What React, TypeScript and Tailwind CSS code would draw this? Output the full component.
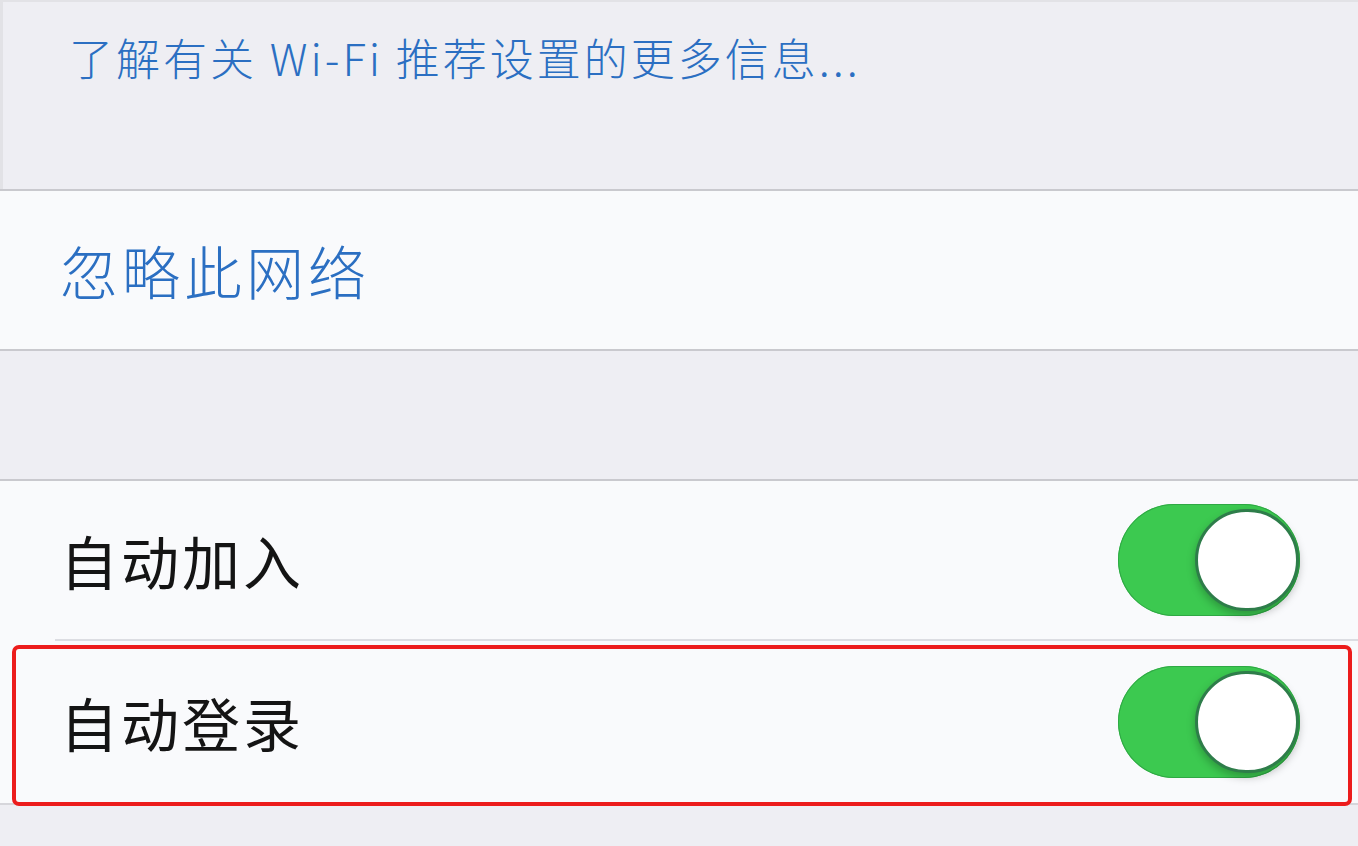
import React from 'react';

const font = { fontFamily: '"Noto Sans CJK SC", "Noto Sans", sans-serif' };

function Toggle() {
  return (
    <div className="relative h-[112px] w-[182px] rounded-full bg-[#3cc950] shadow-[inset_0_0_0_1px_#2fa844]">
      <div className="absolute right-[1px] top-[5px] h-[102px] w-[104px] rounded-full border-[3px] border-[#2e7d4a] bg-white shadow-[0_4px_8px_rgba(0,0,0,0.25)]" />
    </div>
  );
}

export default function App() {
  return (
    <div className="flex h-[846px] w-[1358px] flex-col overflow-hidden bg-[#eeeef3]" style={font}>
      {/* footer text of the previous group */}
      <div className="h-[189px] border-l-[3px] border-t-[2px] border-[#e2e2e6] pl-[66px] pt-[26px]">
        <p className="text-[44px] font-light leading-[58px] tracking-[3px] text-[#2b6fc2]">
          了解有关 Wi-Fi 推荐设置的更多信息...
        </p>
      </div>

      <div className="flex h-[162px] items-center border-y-[2px] border-[#c9c9ce] bg-[#f9fafc] pl-[60px]">
        <span className="text-[58px] font-light tracking-[4px] text-[#2b6fc2]">忽略此网络</span>
      </div>

      <div className="h-[128px]" />

      <div className="border-t-[2px] border-[#c9c9ce] bg-[#f9fafc]">
        <div className="flex h-[158px] items-center justify-between pl-[60px] pr-[58px]">
          <span className="text-[58px] tracking-[3px] text-[#141414]">自动加入</span>
          <Toggle />
        </div>
        <div className="ml-[55px] h-[2px] bg-[#dcdde2]" />
        <div className="relative flex h-[162px] items-center justify-between pl-[60px] pr-[58px]">
          <span className="text-[58px] tracking-[3px] text-[#141414]">自动登录</span>
          <Toggle />
          <div className="pointer-events-none absolute bottom-[-3px] left-[12px] right-[6px] top-[4px] rounded-[7px] border-[4px] border-[#ec1c1c]" />
        </div>
      </div>
      <div className="h-[2px] bg-[#d6d6db]" />
    </div>
  );
}
